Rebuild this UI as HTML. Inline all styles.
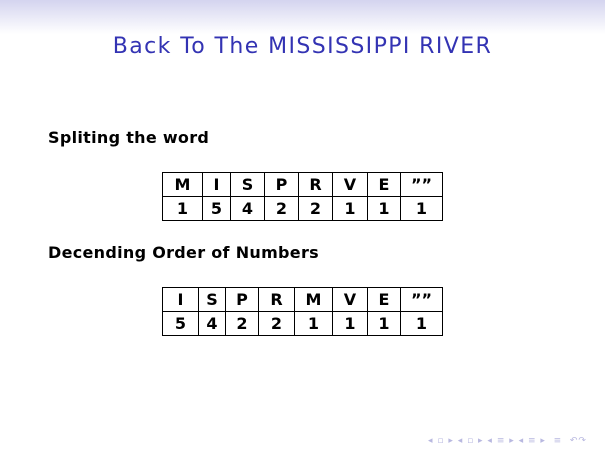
<!DOCTYPE html>
<html><head><style>
body{margin:0;width:605px;height:453px;overflow:hidden;background:#fff;font-family:"DejaVu Sans","Liberation Sans",sans-serif;position:relative}
.hdr{position:absolute;left:0;top:0;width:605px;height:34px;background:linear-gradient(#d4d4ef,#fff)}
.title{position:absolute;left:0;width:605px;top:34px;text-align:center;color:#3333b3;font-size:22px;letter-spacing:1.4px;font-family:"DejaVu Sans",sans-serif}
h3{position:absolute;left:48px;margin:0;font-size:16px;letter-spacing:0.3px;font-weight:bold;color:#000}
table{position:absolute;border-collapse:collapse;font-size:16px;font-weight:bold}
td{border:1px solid #000;text-align:center;padding:0;height:23px;line-height:22px}
.nav{position:absolute;left:428px;top:436px;color:#b8b8e0;font-size:9px;letter-spacing:1px;white-space:nowrap}
</style></head><body>
<div class="hdr"></div>
<div class="title">Back To The MISSISSIPPI RIVER</div>
<h3 style="top:128px">Spliting the word</h3>
<table style="left:162px;top:172px;width:281px">
<tr><td style="width:39px">M</td><td style="width:27px">I</td><td style="width:33px">S</td><td style="width:33px">P</td><td style="width:33px">R</td><td style="width:34px">V</td><td style="width:32px">E</td><td>””</td></tr>
<tr><td>1</td><td>5</td><td>4</td><td>2</td><td>2</td><td>1</td><td>1</td><td>1</td></tr>
</table>
<h3 style="top:243px">Decending Order of Numbers</h3>
<table style="left:162px;top:287px;width:281px">
<tr><td style="width:35px">I</td><td style="width:26px">S</td><td style="width:32px">P</td><td style="width:35px">R</td><td style="width:37px">M</td><td style="width:34px">V</td><td style="width:32px">E</td><td>””</td></tr>
<tr><td>5</td><td>4</td><td>2</td><td>2</td><td>1</td><td>1</td><td>1</td><td>1</td></tr>
</table>
<div class="nav">◂ ▫ ▸ ◂ ▫ ▸ ◂ ≡ ▸ ◂ ≡ ▸ &nbsp;≡ &nbsp;↶↷</div>
</body></html>
